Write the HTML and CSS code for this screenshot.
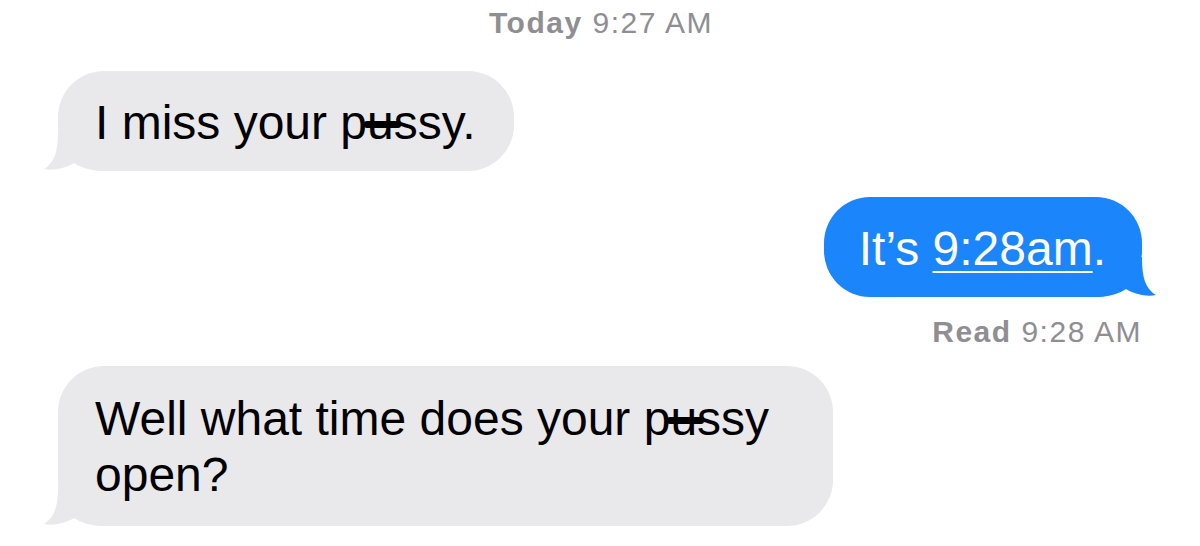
FILE: index.html
```html
<!DOCTYPE html>
<html lang="en">
<head>
<meta charset="utf-8">
<title>Messages</title>
<link rel="stylesheet" href="styles.css">
</head>
<body>
<div class="thread">
  <div class="stamp"><b>Today</b> 9:27 AM</div>

  <div class="row row-in first">
    <div class="bubble bubble-in">I miss your p<span class="censor">u</span>ssy.<svg class="tail tail-in" viewBox="0 0 60 40" width="60" height="40"><path d="M14 0 C14 20 11 31 0 38 C10 40 22 37 30 32 C36 36 46 40 60 40 L60 0 Z"/></svg></div>
  </div>

  <div class="row row-out">
    <div class="bubble bubble-out">It’s <span class="link">9:28am</span>.<svg class="tail tail-out" viewBox="0 0 60 40" width="60" height="40"><path d="M14 0 C14 20 11 31 0 38 C10 40 22 37 30 32 C36 36 46 40 60 40 L60 0 Z"/></svg></div>
  </div>

  <div class="receipt"><b>Read</b> 9:28 AM</div>

  <div class="row row-in">
    <div class="bubble bubble-in wide">Well what time does your p<span class="censor">u</span>ssy open?<svg class="tail tail-in" viewBox="0 0 60 40" width="60" height="40"><path d="M14 0 C14 20 11 31 0 38 C10 40 22 37 30 32 C36 36 46 40 60 40 L60 0 Z"/></svg></div>
  </div>
</div>
</body>
</html>
```

FILE: styles.css
```css
* { box-sizing: border-box; }

html, body {
  margin: 0;
  padding: 0;
  background: #ffffff;
}

body {
  width: 1200px;
  height: 546px;
  overflow: hidden;
  font-family: "Liberation Sans", Arial, sans-serif;
}

.thread {
  display: flex;
  flex-direction: column;
  padding: 6px 58px 0 58px;
}

.stamp,
.receipt {
  font-size: 30px;
  line-height: 34px;
  color: #8e8e93;
  letter-spacing: 1.5px;
}

.stamp b,
.receipt b {
  font-weight: 700;
}

.stamp {
  text-align: center;
  padding-left: 2px;
}

.receipt {
  text-align: right;
  margin-top: 18px;
  margin-right: 0;
}

.row {
  display: flex;
  margin-top: 26px;
}

.row.first {
  margin-top: 31px;
}

.row-out {
  justify-content: flex-end;
}

.receipt + .row {
  margin-top: 17px;
}

.bubble {
  position: relative;
  z-index: 0;
  font-size: 48px;
  line-height: 56px;
  padding: 24px 38px 20px 37px;
  border-radius: 46px;
}

.bubble-in {
  background: #e9e9eb;
  color: #000000;
}

.bubble-out {
  background: #1b85fb;
  color: #ffffff;
  padding-left: 35px;
  padding-right: 36px;
}

.wide {
  width: 775px;
  padding-top: 25px;
  padding-bottom: 23px;
}

.link {
  text-decoration: underline;
  text-decoration-thickness: 2px;
  text-underline-offset: 6px;
}

.censor {
  position: relative;
}

.censor::after {
  content: "";
  position: absolute;
  left: -3px;
  right: -7px;
  top: 50%;
  height: 7px;
  margin-top: -2px;
  background: #000000;
  border-radius: 3px;
}

.tail {
  position: absolute;
  bottom: 0;
  z-index: -1;
}

.tail-in {
  left: -14px;
  fill: #e9e9eb;
}

.tail-out {
  right: -14px;
  fill: #1b85fb;
  transform: scaleX(-1);
}
```
